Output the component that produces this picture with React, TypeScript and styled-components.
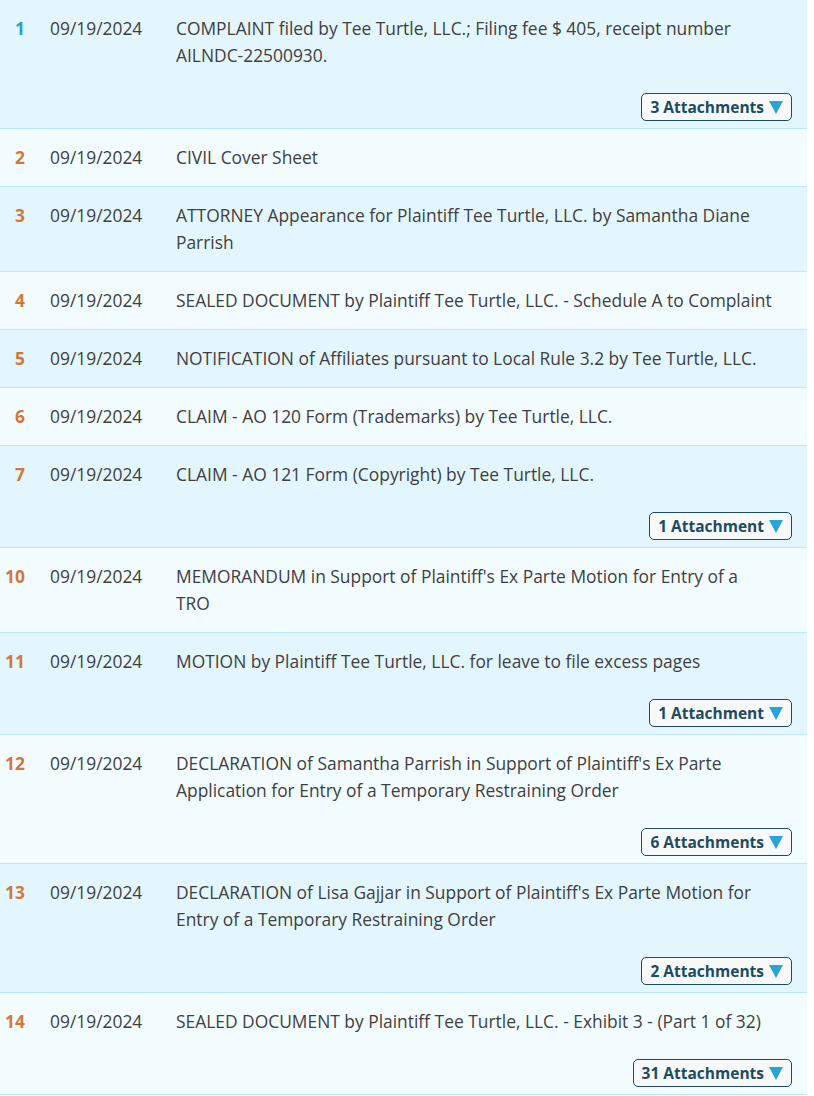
import React from "react";
import styled, { createGlobalStyle } from "styled-components";

const GlobalStyle = createGlobalStyle`
  html, body { margin: 0; padding: 0; background: #ffffff; }
  body { font-family: "Open Sans", "Noto Sans", sans-serif; }
`;

type Entry = {
  no: number;
  date: string;
  text: string;
  attachments?: number;
};

const entries: Entry[] = [
  { no: 1, date: "09/19/2024", text: "COMPLAINT filed by Tee Turtle, LLC.; Filing fee $ 405, receipt number AILNDC-22500930.", attachments: 3 },
  { no: 2, date: "09/19/2024", text: "CIVIL Cover Sheet" },
  { no: 3, date: "09/19/2024", text: "ATTORNEY Appearance for Plaintiff Tee Turtle, LLC. by Samantha Diane Parrish" },
  { no: 4, date: "09/19/2024", text: "SEALED DOCUMENT by Plaintiff Tee Turtle, LLC. - Schedule A to Complaint" },
  { no: 5, date: "09/19/2024", text: "NOTIFICATION of Affiliates pursuant to Local Rule 3.2 by Tee Turtle, LLC." },
  { no: 6, date: "09/19/2024", text: "CLAIM - AO 120 Form (Trademarks) by Tee Turtle, LLC." },
  { no: 7, date: "09/19/2024", text: "CLAIM - AO 121 Form (Copyright) by Tee Turtle, LLC.", attachments: 1 },
  { no: 10, date: "09/19/2024", text: "MEMORANDUM in Support of Plaintiff's Ex Parte Motion for Entry of a TRO" },
  { no: 11, date: "09/19/2024", text: "MOTION by Plaintiff Tee Turtle, LLC. for leave to file excess pages", attachments: 1 },
  { no: 12, date: "09/19/2024", text: "DECLARATION of Samantha Parrish in Support of Plaintiff's Ex Parte Application for Entry of a Temporary Restraining Order", attachments: 6 },
  { no: 13, date: "09/19/2024", text: "DECLARATION of Lisa Gajjar in Support of Plaintiff's Ex Parte Motion for Entry of a Temporary Restraining Order", attachments: 2 },
  { no: 14, date: "09/19/2024", text: "SEALED DOCUMENT by Plaintiff Tee Turtle, LLC. - Exhibit 3 - (Part 1 of 32)", attachments: 31 },
];

const Docket = styled.div`
  width: 807px;
`;

const Row = styled.div<{ $shade: boolean }>`
  display: flex;
  flex-direction: column;
  background: ${(p) => (p.$shade ? "#e3f6fe" : "#f2fbfe")};
  border-bottom: 1px solid #bce9fa;
  padding: 15px 15px 0 0;
`;

const Main = styled.div`
  display: flex;
  align-items: flex-start;
  font-size: 17.4px;
  line-height: 27px;
  color: #3f3f3f;
  padding-bottom: 15px;
`;

const Num = styled.span<{ $first: boolean }>`
  width: 25px;
  flex: none;
  text-align: right;
  font-weight: 700;
  color: ${(p) => (p.$first ? "#2a9fd6" : "#d2773a")};
`;

const DateCell = styled.span`
  width: 126px;
  margin-left: 25px;
  flex: none;
`;

const Desc = styled.span`
  flex: 1;
  max-width: 598px;
`;

const ButtonRow = styled.div`
  display: flex;
  justify-content: flex-end;
  margin-top: 9px;
  padding-bottom: 7px;
`;

const AttachButton = styled.button`
  display: flex;
  align-items: center;
  gap: 5px;
  height: 28px;
  box-sizing: border-box;
  padding: 0 8px 0 8px;
  background: #f7f8f8;
  border: 1.5px solid #1d4c60;
  border-radius: 5px;
  font-family: inherit;
  font-size: 15.5px;
  font-weight: 700;
  color: #1d4c60;
  cursor: pointer;
`;

const Triangle = styled.svg`
  width: 14px;
  height: 13px;
  flex: none;
`;

export default function App() {
  return (
    <>
      <GlobalStyle />
      <Docket>
        {entries.map((e, i) => (
          <Row key={e.no} $shade={i % 2 === 0}>
            <Main>
              <Num $first={e.no === 1}>{e.no}</Num>
              <DateCell>{e.date}</DateCell>
              <Desc>{e.text}</Desc>
            </Main>
            {e.attachments !== undefined && (
              <ButtonRow>
                <AttachButton>
                  {e.attachments} {e.attachments === 1 ? "Attachment" : "Attachments"}
                  <Triangle viewBox="0 0 14 13">
                    <polygon points="0,0 14,0 7,13" fill="#2aa3d8" />
                  </Triangle>
                </AttachButton>
              </ButtonRow>
            )}
          </Row>
        ))}
      </Docket>
    </>
  );
}
